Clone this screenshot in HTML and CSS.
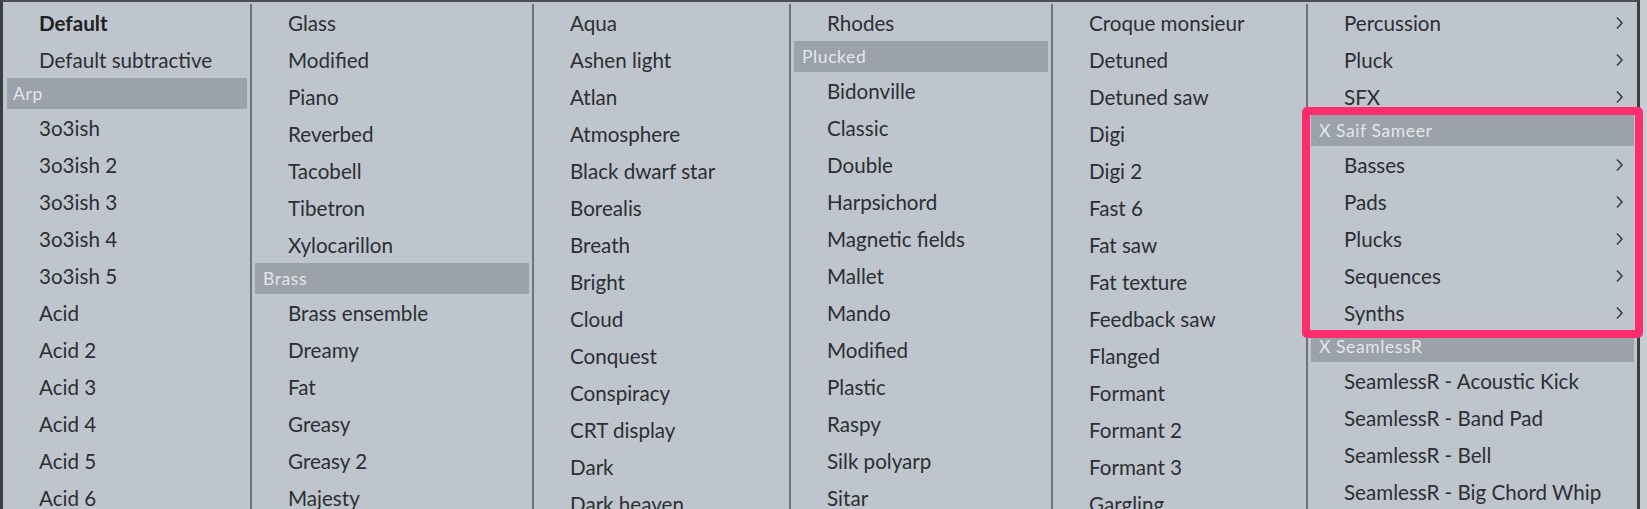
FILE: index.html
```html
<!DOCTYPE html>
<html>
<head>
<meta charset="utf-8">
<link rel="stylesheet" href="styles.css">
</head>
<body>
<div class="menu">
  <div class="col c1">
    <div class="item bold">Default</div>
    <div class="item">Default subtractive</div>
    <div class="hdr"><span>Arp</span></div>
    <div class="item">3o3ish</div>
    <div class="item">3o3ish 2</div>
    <div class="item">3o3ish 3</div>
    <div class="item">3o3ish 4</div>
    <div class="item">3o3ish 5</div>
    <div class="item">Acid</div>
    <div class="item">Acid 2</div>
    <div class="item">Acid 3</div>
    <div class="item">Acid 4</div>
    <div class="item">Acid 5</div>
    <div class="item">Acid 6</div>
  </div>
  <div class="col c2">
    <div class="item">Glass</div>
    <div class="item">Modified</div>
    <div class="item">Piano</div>
    <div class="item">Reverbed</div>
    <div class="item">Tacobell</div>
    <div class="item">Tibetron</div>
    <div class="item">Xylocarillon</div>
    <div class="hdr"><span>Brass</span></div>
    <div class="item">Brass ensemble</div>
    <div class="item">Dreamy</div>
    <div class="item">Fat</div>
    <div class="item">Greasy</div>
    <div class="item">Greasy 2</div>
    <div class="item">Majesty</div>
  </div>
  <div class="col c3">
    <div class="item">Aqua</div>
    <div class="item">Ashen light</div>
    <div class="item">Atlan</div>
    <div class="item">Atmosphere</div>
    <div class="item">Black dwarf star</div>
    <div class="item">Borealis</div>
    <div class="item">Breath</div>
    <div class="item">Bright</div>
    <div class="item">Cloud</div>
    <div class="item">Conquest</div>
    <div class="item">Conspiracy</div>
    <div class="item">CRT display</div>
    <div class="item">Dark</div>
    <div class="item">Dark heaven</div>
  </div>
  <div class="col c4">
    <div class="item">Rhodes</div>
    <div class="hdr"><span>Plucked</span></div>
    <div class="item">Bidonville</div>
    <div class="item">Classic</div>
    <div class="item">Double</div>
    <div class="item">Harpsichord</div>
    <div class="item">Magnetic fields</div>
    <div class="item">Mallet</div>
    <div class="item">Mando</div>
    <div class="item">Modified</div>
    <div class="item">Plastic</div>
    <div class="item">Raspy</div>
    <div class="item">Silk polyarp</div>
    <div class="item">Sitar</div>
  </div>
  <div class="col c5">
    <div class="item">Croque monsieur</div>
    <div class="item">Detuned</div>
    <div class="item">Detuned saw</div>
    <div class="item">Digi</div>
    <div class="item">Digi 2</div>
    <div class="item">Fast 6</div>
    <div class="item">Fat saw</div>
    <div class="item">Fat texture</div>
    <div class="item">Feedback saw</div>
    <div class="item">Flanged</div>
    <div class="item">Formant</div>
    <div class="item">Formant 2</div>
    <div class="item">Formant 3</div>
    <div class="item">Gargling</div>
  </div>
  <div class="col c6">
    <div class="item sub"><span>Percussion</span><svg class="chev" viewBox="0 0 9 14"><path d="M2 1.5 L7 7 L2 12.5"/></svg></div>
    <div class="item sub"><span>Pluck</span><svg class="chev" viewBox="0 0 9 14"><path d="M2 1.5 L7 7 L2 12.5"/></svg></div>
    <div class="item sub"><span>SFX</span><svg class="chev" viewBox="0 0 9 14"><path d="M2 1.5 L7 7 L2 12.5"/></svg></div>
    <div class="hdr"><span>X Saif Sameer</span></div>
    <div class="item sub"><span>Basses</span><svg class="chev" viewBox="0 0 9 14"><path d="M2 1.5 L7 7 L2 12.5"/></svg></div>
    <div class="item sub"><span>Pads</span><svg class="chev" viewBox="0 0 9 14"><path d="M2 1.5 L7 7 L2 12.5"/></svg></div>
    <div class="item sub"><span>Plucks</span><svg class="chev" viewBox="0 0 9 14"><path d="M2 1.5 L7 7 L2 12.5"/></svg></div>
    <div class="item sub"><span>Sequences</span><svg class="chev" viewBox="0 0 9 14"><path d="M2 1.5 L7 7 L2 12.5"/></svg></div>
    <div class="item sub"><span>Synths</span><svg class="chev" viewBox="0 0 9 14"><path d="M2 1.5 L7 7 L2 12.5"/></svg></div>
    <div class="hdr"><span>X SeamlessR</span></div>
    <div class="item">SeamlessR - Acoustic Kick</div>
    <div class="item">SeamlessR - Band Pad</div>
    <div class="item">SeamlessR - Bell</div>
    <div class="item">SeamlessR - Big Chord Whip</div>
  </div>
  <div class="highlight"></div>
</div>
</body>
</html>
```

FILE: styles.css
```css
html, body {
  margin: 0;
  padding: 0;
}
body {
  width: 1647px;
  height: 509px;
  overflow: hidden;
  background: #c8cdd2;
  font-family: Lato, "Liberation Sans", sans-serif;
}
.menu {
  position: relative;
  display: flex;
  width: 1634px;
  height: 520px;
  background: #bfc5cc;
  border-left: 3px solid #3b3f44;
  border-right: 3px solid #3b3f44;
  border-top: 2px solid #4a4e53;
  padding-top: 2px;
}
.col {
  display: flex;
  flex-direction: column;
  flex: none;
  box-sizing: border-box;
}
.col + .col {
  border-left: 2px solid #6e737a;
}
.c1 { width: 247px; }
.c2 { width: 282px; }
.c3 { width: 257px; }
.c4 { width: 262px; }
.c5 { width: 255px; }
.c6 { width: 331px; }
.item {
  height: 37px;
  display: flex;
  align-items: center;
  padding-left: 36px;
  padding-right: 13px;
  font-size: 20.6px;
  color: #2c2f34;
  white-space: nowrap;
}
.bold {
  font-weight: 700;
  color: #1e2023;
}
.sub {
  justify-content: space-between;
}
.chev {
  width: 9px;
  height: 14px;
  fill: none;
  stroke: #3d4146;
  stroke-width: 1.6;
}
.hdr {
  height: 31px;
  margin: 0 3px 0 4px;
  background: #9ba2aa;
  display: flex;
  align-items: center;
  padding-left: 6px;
  font-size: 17.5px;
  letter-spacing: 0.6px;
  color: #e4e7ea;
  white-space: nowrap;
}
.col + .col .hdr {
  margin: 0 3px;
  padding-left: 8px;
}
.highlight {
  position: absolute;
  left: 1299px;
  top: 105px;
  width: 325px;
  height: 215px;
  border: 8px solid #fb2d6c;
  border-radius: 5px;
}
```
